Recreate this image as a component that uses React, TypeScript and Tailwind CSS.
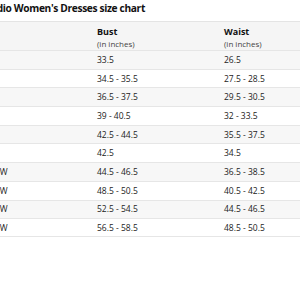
const rows = [
  ["XS", "33.5", "26.5"],
  ["S", "34.5 - 35.5", "27.5 - 28.5"],
  ["M", "36.5 - 37.5", "29.5 - 30.5"],
  ["L", "39 - 40.5", "32 - 33.5"],
  ["XL", "42.5 - 44.5", "35.5 - 37.5"],
  ["1X", "42.5", "34.5"],
  ["14W", "44.5 - 46.5", "36.5 - 38.5"],
  ["16W", "48.5 - 50.5", "40.5 - 42.5"],
  ["18W", "52.5 - 54.5", "44.5 - 46.5"],
  ["20W", "56.5 - 58.5", "48.5 - 50.5"],
];

export default function App() {
  return (
    <div
      className="w-[300px] h-[300px] overflow-hidden bg-white text-[#222]"
      style={{ fontFamily: '"Open Sans", sans-serif' }}
    >
      <div className="-ml-[19px] w-[420px] h-[21px] pt-[1px] text-[10.2px] font-bold leading-[15px] tracking-[-0.35px] text-[#111] whitespace-nowrap">
        Studio Women's Dresses size chart
      </div>
      <div className="-ml-[40px] w-[420px]">
        <div className="border-t border-[#e4e4e4] bg-[#f5f5f5] h-[29px] flex">
          <div className="w-[137px]" />
          <div className="w-[127px] pt-[4px]">
            <div className="text-[9px] font-bold leading-[12px] text-[#111]">Bust</div>
            <div className="text-[8px] leading-[11px] text-[#444]">(in inches)</div>
          </div>
          <div className="w-[130px] pt-[4px]">
            <div className="text-[9px] font-bold leading-[12px] text-[#111]">Waist</div>
            <div className="text-[8px] leading-[11px] text-[#444]">(in inches)</div>
          </div>
        </div>
        {rows.map((r, i) => (
          <div
            key={i}
            className={`h-[18.7px] flex items-center border-t border-[#e6e6e6] text-[8.5px] leading-[12px] ${
              i % 2 === 0 ? "bg-[#f7f7f7]" : "bg-white"
            } ${i === rows.length - 1 ? "border-b" : ""}`}
          >
            <div className="w-[137px] pl-[30px]">{r[0]}</div>
            <div className="w-[127px]">{r[1]}</div>
            <div className="w-[130px]">{r[2]}</div>
          </div>
        ))}
      </div>
    </div>
  );
}
